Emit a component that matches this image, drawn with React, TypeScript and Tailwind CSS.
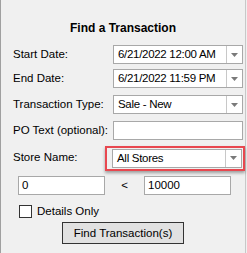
import React from 'react';

const Arrow: React.FC = () => (
  <div className="w-[16px] h-full flex items-center justify-center border-l border-[#c8c8c8]">
    <svg width="7" height="4" viewBox="0 0 7 4">
      <path d="M0 0h7L3.5 4z" fill="#7a7a7a" />
    </svg>
  </div>
);

const Combo: React.FC<{ value: string }> = ({ value }) => (
  <div className="w-[130px] h-[19px] flex bg-white border border-[#a8a8a8]">
    <div className="flex-1 pl-[4px] leading-[17px] whitespace-nowrap tracking-[-0.3px]">{value}</div>
    <Arrow />
  </div>
);

const Row: React.FC<{ label: string; className?: string; children: React.ReactNode }> = ({ label, className, children }) => (
  <div className={`flex items-center h-[19px] ${className ?? ''}`}>
    <div className="w-[112px] pl-[12px] whitespace-nowrap">{label}</div>
    {children}
  </div>
);

const App: React.FC = () => {
  return (
    <div
      className="w-[247px] h-[253px] bg-[#f0f0f0] border-l border-[#a0a0a0] text-[11.5px] text-black"
      style={{ fontFamily: '"Liberation Sans", Arial, sans-serif' }}
    >
      <div className="w-[245px] h-full border-r border-[#c8c8c8] flex flex-col">
        <div className="pt-[19px] h-[45px] text-center font-bold text-[12px]">Find a Transaction</div>
        <Row label="Start Date:"><Combo value="6/21/2022 12:00 AM" /></Row>
        <Row label="End Date:" className="mt-[5px]"><Combo value="6/21/2022 11:59 PM" /></Row>
        <Row label="Transaction Type:" className="mt-[7px]"><Combo value="Sale - New" /></Row>
        <Row label="PO Text (optional):" className="mt-[7px]">
          <div className="w-[130px] h-[19px] bg-white border border-[#a8a8a8]" />
        </Row>
        <div className="flex items-center h-[24px] mt-[6px]">
          <div className="w-[104px] pl-[12px]">Store Name:</div>
          <div className="py-[1px] pr-[1px] pl-[5px] border-2 border-[#e8474f] shadow-[0_2px_3px_rgba(0,0,0,0.35)]">
            <Combo value="All Stores" />
          </div>
        </div>
        <div className="flex items-center mt-[6px] pl-[17px] h-[19px]">
          <div className="w-[87px] h-[19px] bg-white border border-[#a8a8a8] pl-[3px] leading-[17px]">0</div>
          <div className="w-[39px] text-center">&lt;</div>
          <div className="w-[87px] h-[19px] bg-white border border-[#a8a8a8] pl-[3px] leading-[17px]">10000</div>
        </div>
        <div className="flex items-center mt-[10px] pl-[18px] h-[13px]">
          <div className="w-[13px] h-[13px] bg-white border border-[#333]" />
          <span className="pl-[5px]">Details Only</span>
        </div>
        <div className="pl-[61px] mt-[4px]">
          <div className="w-[122px] h-[22px] bg-[#e1e1e1] border border-[#333] text-center leading-[20px]">
            Find Transaction(s)
          </div>
        </div>
      </div>
    </div>
  );
};

export default App;
